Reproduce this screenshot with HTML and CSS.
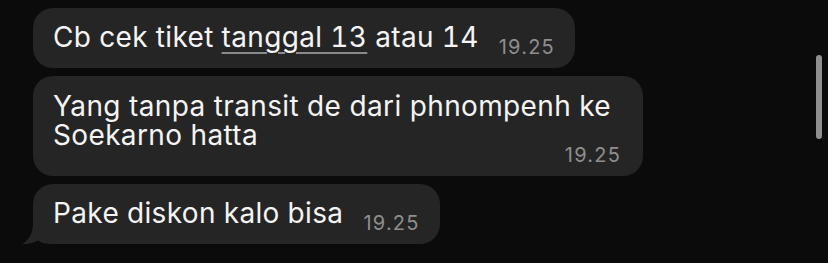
FILE: index.html
```html
<!DOCTYPE html>
<html lang="id">
<head>
<meta charset="utf-8">
<title>Chat</title>
<link rel="stylesheet" href="styles.css">
</head>
<body>
<div class="chat">
  <div class="bubble single">
    <span class="text">Cb cek tiket <span class="link">tanggal 13</span> atau 14</span>
    <span class="time">19.25</span>
  </div>
  <div class="bubble multi">
    <span class="text">Yang tanpa transit de dari phnompenh ke Soekarno hatta</span>
    <span class="time">19.25</span>
  </div>
  <div class="bubble single tailed">
    <span class="text">Pake diskon kalo bisa</span>
    <span class="time">19.25</span>
    <svg class="tail" width="34" height="22" viewBox="0 0 34 22"><path d="M12 0 C12 12 8 18 1 22 C7 22.5 13 21 17 18.5 C20 21 25 22 34 22 L34 0 Z" fill="#252525"/></svg>
  </div>
</div>
<div class="scrollbar"></div>
</body>
</html>
```
FILE: styles.css
```css
html, body {
  margin: 0;
  padding: 0;
  background: #0b0b0b;
  height: 100%;
  overflow: hidden;
}
body {
  font-family: Inter, "Noto Sans", sans-serif;
  color: #f4f4f4;
}
.chat {
  display: flex;
  flex-direction: column;
  align-items: flex-start;
  gap: 8px;
  padding: 8px 0 0 33px;
}
.bubble {
  position: relative;
  background: #252525;
  border-radius: 20px;
  padding: 14px 20px 16px 20px;
  font-size: 28px;
  line-height: 30px;
  letter-spacing: 0.35px;
  box-sizing: border-box;
}
.single {
  display: flex;
  align-items: flex-end;
  gap: 20px;
  height: 60px;
}
.single .time {
  top: 6px;
}
.single .text {
  font-feature-settings: "tnum";
}
.multi {
  display: flex;
  flex-direction: column;
  width: 610px;
  height: 100px;
  padding: 16px 14px 10px 20px;
  line-height: 29px;
}
.multi .text {
  height: 50px;
  overflow: visible;
}
.multi .time {
  align-self: flex-end;
  line-height: 12px;
  margin: 7px 8px 0 0;
}
.time {
  font-size: 20px;
  line-height: 22px;
  color: #8e8e8e;
  letter-spacing: 1.2px;
  position: relative;
}
.link {
  text-decoration: underline;
  text-decoration-color: #8a8a8a;
  text-decoration-thickness: 1.5px;
  text-underline-offset: 5px;
  text-decoration-skip-ink: auto;
}
.tail {
  position: absolute;
  left: -12px;
  bottom: 0;
}
.scrollbar {
  position: absolute;
  left: 816px;
  top: 55px;
  width: 6px;
  height: 84px;
  border-radius: 3px;
  background: #8f8f8f;
}
```
